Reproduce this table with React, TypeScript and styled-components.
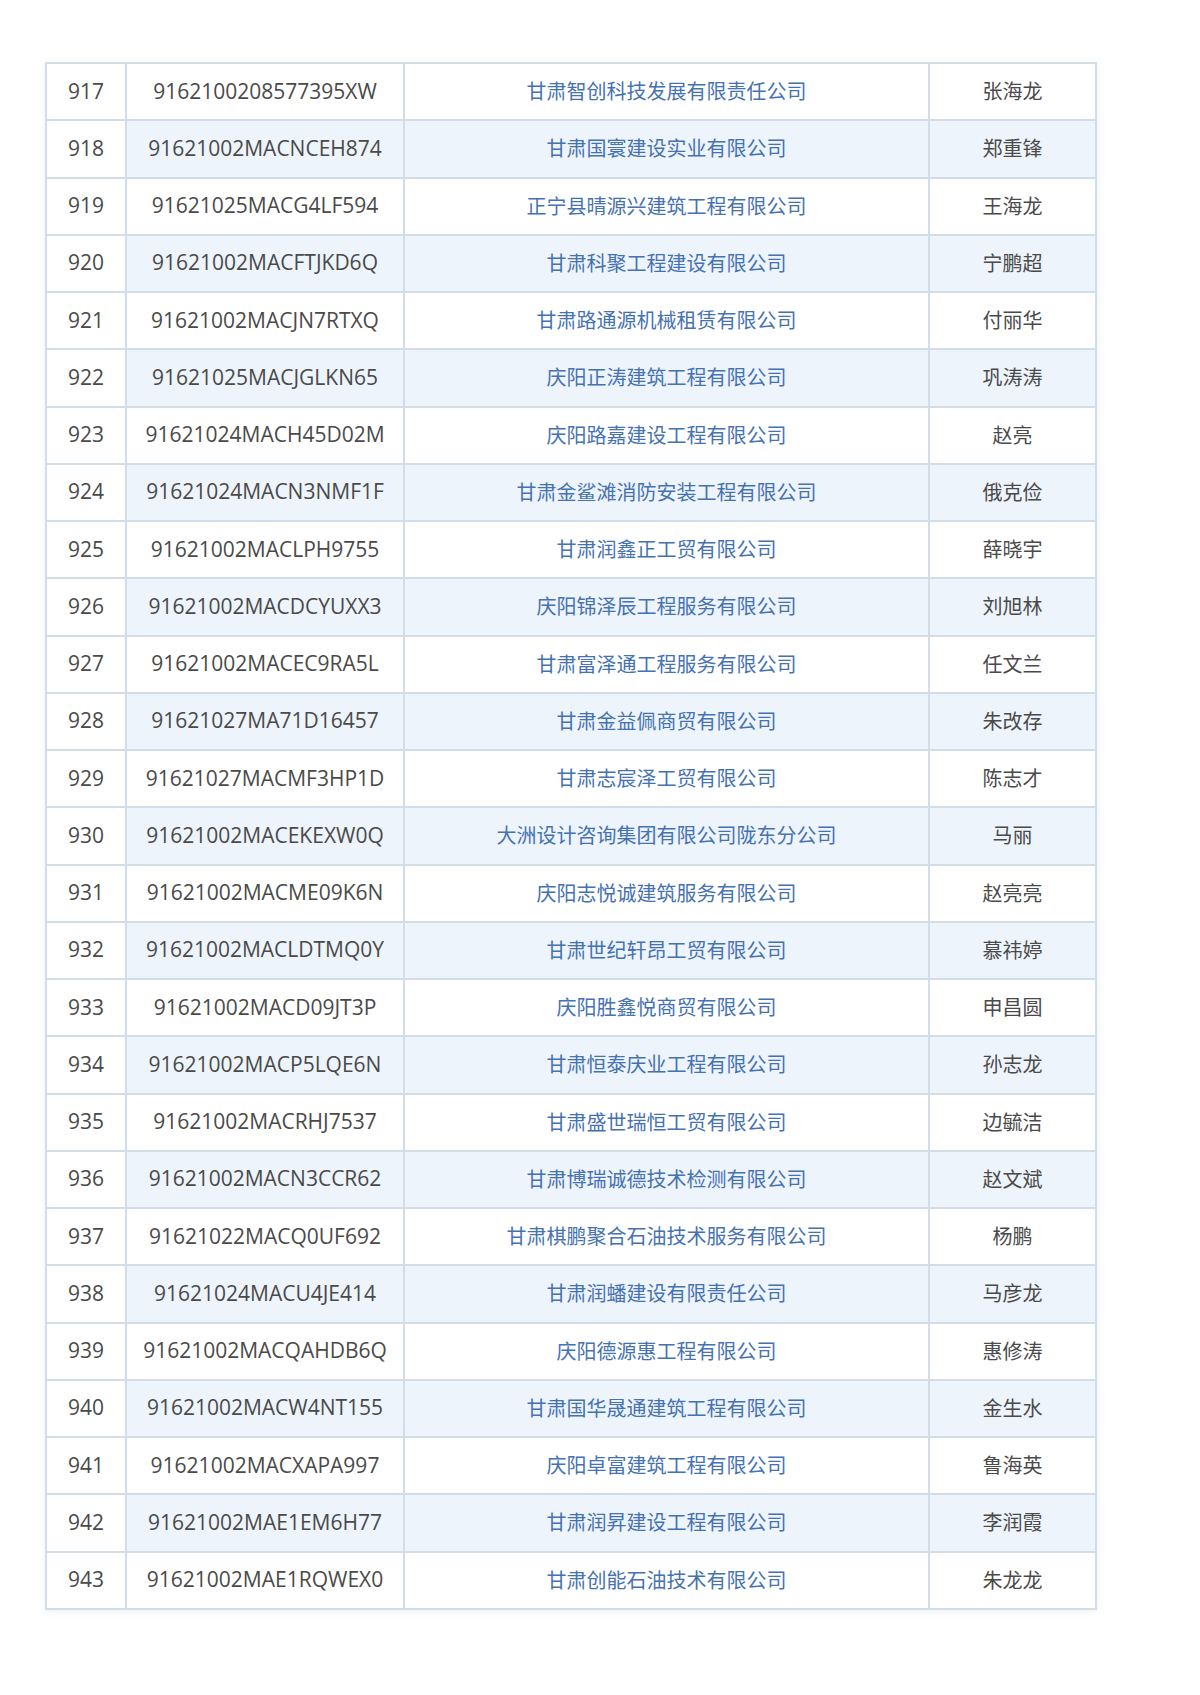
import React from "react";
import styled, { createGlobalStyle } from "styled-components";

const Global = createGlobalStyle`
  html, body { margin: 0; padding: 0; background: #ffffff; }
  body { font-family: "Noto Sans CJK SC", "Noto Sans", sans-serif; }
`;

const Page = styled.div`
  width: 1200px;
  height: 1695px;
  box-sizing: border-box;
  padding: 62px 0 0 45px;
  background: #ffffff;
`;

const Table = styled.div`
  display: grid;
  grid-template-columns: 80px 278px 525px 167px;
  width: max-content;
  border-top: 2px solid #d3dde8;
  border-left: 2px solid #d3dde8;
  box-shadow: 0 2px 6px rgba(120, 140, 170, 0.12);
`;

const Cell = styled.div<{ $alt?: boolean; $blue?: boolean; $latin?: boolean }>`
  box-sizing: border-box;
  height: 57.26px;
  padding-bottom: 2px;
  display: flex;
  align-items: center;
  justify-content: center;
  border-right: 2px solid #d3dde8;
  border-bottom: 2px solid #d3dde8;
  background: ${(p) => (p.$alt ? "#edf4fc" : "#ffffff")};
  color: ${(p) => (p.$blue ? "#4572b3" : "#4a4a4a")};
  font-size: ${(p) => (p.$latin ? "21px" : "20px")};
  white-space: nowrap;
  font-family: ${(p) =>
    p.$latin
      ? '"Open Sans", "Noto Sans", sans-serif'
      : '"Noto Sans CJK SC", "Noto Sans", sans-serif'};
`;

const rows: [string, string, string, string][] = [
  ["917", "9162100208577395XW", "甘肃智创科技发展有限责任公司", "张海龙"],
  ["918", "91621002MACNCEH874", "甘肃国寰建设实业有限公司", "郑重锋"],
  ["919", "91621025MACG4LF594", "正宁县晴源兴建筑工程有限公司", "王海龙"],
  ["920", "91621002MACFTJKD6Q", "甘肃科聚工程建设有限公司", "宁鹏超"],
  ["921", "91621002MACJN7RTXQ", "甘肃路通源机械租赁有限公司", "付丽华"],
  ["922", "91621025MACJGLKN65", "庆阳正涛建筑工程有限公司", "巩涛涛"],
  ["923", "91621024MACH45D02M", "庆阳路嘉建设工程有限公司", "赵亮"],
  ["924", "91621024MACN3NMF1F", "甘肃金鲨滩消防安装工程有限公司", "俄克俭"],
  ["925", "91621002MACLPH9755", "甘肃润鑫正工贸有限公司", "薛晓宇"],
  ["926", "91621002MACDCYUXX3", "庆阳锦泽辰工程服务有限公司", "刘旭林"],
  ["927", "91621002MACEC9RA5L", "甘肃富泽通工程服务有限公司", "任文兰"],
  ["928", "91621027MA71D16457", "甘肃金益佩商贸有限公司", "朱改存"],
  ["929", "91621027MACMF3HP1D", "甘肃志宸泽工贸有限公司", "陈志才"],
  ["930", "91621002MACEKEXW0Q", "大洲设计咨询集团有限公司陇东分公司", "马丽"],
  ["931", "91621002MACME09K6N", "庆阳志悦诚建筑服务有限公司", "赵亮亮"],
  ["932", "91621002MACLDTMQ0Y", "甘肃世纪轩昂工贸有限公司", "慕祎婷"],
  ["933", "91621002MACD09JT3P", "庆阳胜鑫悦商贸有限公司", "申昌圆"],
  ["934", "91621002MACP5LQE6N", "甘肃恒泰庆业工程有限公司", "孙志龙"],
  ["935", "91621002MACRHJ7537", "甘肃盛世瑞恒工贸有限公司", "边毓洁"],
  ["936", "91621002MACN3CCR62", "甘肃博瑞诚德技术检测有限公司", "赵文斌"],
  ["937", "91621022MACQ0UF692", "甘肃棋鹏聚合石油技术服务有限公司", "杨鹏"],
  ["938", "91621024MACU4JE414", "甘肃润蟠建设有限责任公司", "马彦龙"],
  ["939", "91621002MACQAHDB6Q", "庆阳德源惠工程有限公司", "惠修涛"],
  ["940", "91621002MACW4NT155", "甘肃国华晟通建筑工程有限公司", "金生水"],
  ["941", "91621002MACXAPA997", "庆阳卓富建筑工程有限公司", "鲁海英"],
  ["942", "91621002MAE1EM6H77", "甘肃润昇建设工程有限公司", "李润霞"],
  ["943", "91621002MAE1RQWEX0", "甘肃创能石油技术有限公司", "朱龙龙"],
];

export default function App() {
  return (
    <>
      <Global />
      <Page>
        <Table>
          {rows.map(([n, code, company, person], i) => {
            const alt = i % 2 === 1;
            return (
              <React.Fragment key={n}>
                <Cell $latin>{n}</Cell>
                <Cell $alt={alt} $latin>
                  {code}
                </Cell>
                <Cell $alt={alt} $blue>
                  {company}
                </Cell>
                <Cell $alt={alt}>{person}</Cell>
              </React.Fragment>
            );
          })}
        </Table>
      </Page>
    </>
  );
}
